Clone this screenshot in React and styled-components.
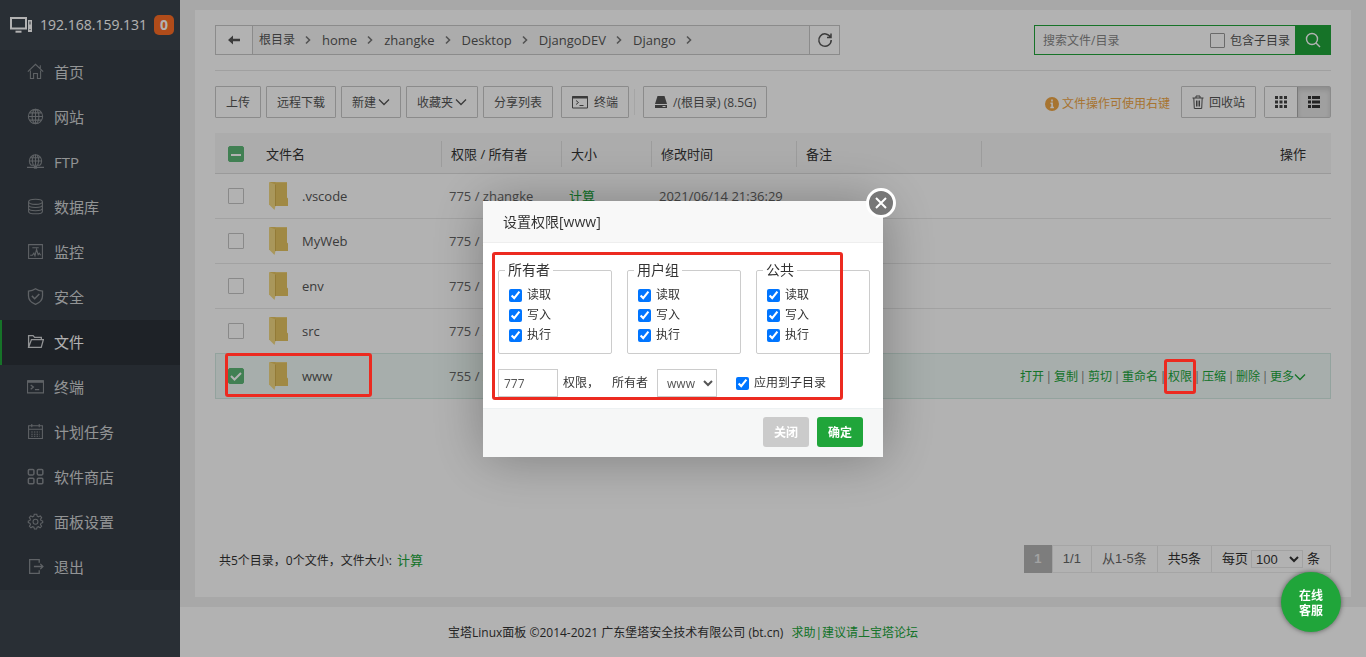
import React from "react";
import styled, { createGlobalStyle, css } from "styled-components";

const GREEN = "#20a53a";

const GlobalStyle = createGlobalStyle`
  *, *::before, *::after { box-sizing: border-box; }
  body {
    margin: 0;
    background: #f1f1f1;
    color: #333;
    font: 12px/18px "Open Sans", "Noto Sans CJK SC", sans-serif;
  }
  button, input, select { font: inherit; color: inherit; }
  button { cursor: pointer; }
  svg { display: block; flex: none; }
`;

const Page = styled.div`
  display: flex;
  min-height: 100vh;
`;

/* Sidebar */
const Sidebar = styled.aside`
  flex: none;
  width: 180px;
  background: #3c444d;
`;
const Host = styled.div`
  display: flex;
  align-items: center;
  height: 50px;
  padding: 0 6px 0 10px;
  color: #fff;
  font-size: 14px;
`;
const HostName = styled.span`
  flex: 1;
  padding-left: 8px;
`;
const Badge = styled.span`
  width: 20px;
  height: 20px;
  border-radius: 5px;
  background: #fc6d26;
  font-weight: 700;
  line-height: 20px;
  text-align: center;
`;
const Menu = styled.nav`
  background: #363d45;
`;
const MenuLink = styled.a`
  display: flex;
  align-items: center;
  gap: 10px;
  height: 45px;
  padding: 0 0 2px 25px;
  border-left: 2px solid ${(p) => (p.$active ? GREEN : "transparent")};
  background: ${(p) => (p.$active ? "#2c3138" : "transparent")};
  color: ${(p) => (p.$active ? "#fff" : "#d2d4d6")};
  font-size: 15px;
  text-decoration: none;
  svg { color: ${(p) => (p.$active ? "#d2d4d6" : "#888d92")}; }
`;

/* Content */
const Main = styled.main`
  flex: 1;
  min-width: 0;
  display: flex;
  flex-direction: column;
`;
const Card = styled.section`
  flex: 1;
  display: flex;
  flex-direction: column;
  margin: 10px 15px;
  padding: 15px 20px 24px;
  background: #fff;
`;
const PathBar = styled.div`
  display: flex;
  justify-content: space-between;
  padding-bottom: 15px;
  border-bottom: 1px solid #e6e6e6;
`;
const PathBox = styled.div`
  display: flex;
  flex: 0 1 625px;
  height: 30px;
  border: 1px solid #c8c8c8;
`;
const PathButton = styled.button`
  display: flex;
  align-items: center;
  justify-content: center;
  width: ${(p) => p.$width};
  padding: 0;
  border: 0;
  background: #fff;
  color: #555;
`;
const Crumbs = styled.nav`
  flex: 1;
  display: flex;
  align-items: center;
  padding-left: 6px;
  border: solid #c8c8c8;
  border-width: 0 1px;
  background: #f7f7f7;
`;
const Crumb = styled.a`
  display: flex;
  align-items: center;
  color: #555;
  font-size: ${(p) => (p.$root ? "12px" : "13px")};
  text-decoration: none;
  svg { margin: 0 10px 0 9px; color: #777; }
`;
const Search = styled.form`
  display: flex;
  align-items: center;
  width: 297px;
  height: 30px;
  border: 1px solid ${GREEN};
`;
const SearchInput = styled.input`
  flex: 1;
  min-width: 0;
  padding: 2px 8px 0;
  border: 0;
  background: none;
  outline: 0;
  &::placeholder { color: #888; opacity: 1; }
`;
const SearchLabel = styled.label`
  display: flex;
  align-items: center;
  gap: 5px;
  padding: 1px 5px 0 0;
  color: #555;
`;
const SearchButton = styled.button`
  display: flex;
  align-items: center;
  justify-content: center;
  align-self: stretch;
  width: 35px;
  padding: 0;
  border: 0;
  background: ${GREEN};
  color: #fff;
`;
const Box = styled.input`
  appearance: none;
  flex: none;
  display: block;
  width: ${(p) => p.$size || "16px"};
  height: ${(p) => p.$size || "16px"};
  margin: 0;
  border: 1px solid ${(p) => p.$line || "#c4c4c4"};
  border-radius: 1px;
`;
const TickWrap = styled.span`
  display: grid;
  width: 16px;
  & > * { grid-area: 1 / 1; }
  svg { color: #fff; pointer-events: none; }
  input:checked { background-color: #5eb878; border-color: #5eb878; border-radius: 2px; }
`;

const Toolbar = styled.div`
  display: flex;
  align-items: center;
  gap: 5px;
  padding: 15px 0;
`;
const ToolButton = styled.button`
  display: flex;
  align-items: center;
  gap: ${(p) => p.$gap || "2px"};
  height: 32px;
  padding: 2px 10px 0;
  border: 1px solid #c8c8c8;
  border-radius: 1px;
  background: #fff;
  color: #555;
  white-space: nowrap;
  svg { margin-bottom: 2px; }
`;
const Group = styled.div`
  display: flex;
  align-items: center;
  gap: 5px;
  margin-left: 3px;
`;
const Divider = styled.span`
  width: 1px;
  height: 26px;
  background: #ececec;
`;
const Hint = styled.span`
  display: flex;
  align-items: center;
  gap: 3px;
  margin: 0 6px 0 auto;
  padding-top: 4px;
  color: #f0a746;
  white-space: nowrap;
`;
const ViewSwitch = styled.div`
  display: flex;
  margin-left: 3px;
  height: 32px;
  border: 1px solid #c8c8c8;
  border-radius: 2px;
`;
const ViewButton = styled.button`
  display: flex;
  align-items: center;
  justify-content: center;
  width: 32px;
  padding: 0;
  border: 0;
  color: #444;
  background: #fff;
  ${(p) =>
    p.$active &&
    css`
      width: 33px;
      border-left: 1px solid #adadad;
      color: #333;
      background: #e6e6e6;
      box-shadow: inset 0 3px 5px rgba(0, 0, 0, 0.125);
    `}
`;

/* File table */
const FileTable = styled.table`
  width: 100%;
  table-layout: fixed;
  border-collapse: separate;
  border-spacing: 0;
  font-size: 13px;
`;
const Th = styled.th`
  height: 41px;
  padding: 2px 0 0 ${(p) => p.$pad || "0"};
  border-bottom: 1px solid #ddd;
  background: #f6f6f6;
  font-weight: 400;
  text-align: left;
`;
const ThLabel = styled.div`
  height: 26px;
  padding: 0 25px 0 9px;
  border-left: 1px solid ${(p) => (p.$plain ? "transparent" : "#e0e0e0")};
  line-height: 26px;
  text-align: ${(p) => p.$align || "left"};
`;
const Td = styled.td`
  height: 45px;
  padding: 0 0 0 ${(p) => p.$pad || "8px"};
  border-bottom: 1px solid #e8e8e8;
  color: #666;
  white-space: nowrap;
`;
const Tr = styled.tr`
  ${(p) =>
    p.$selected &&
    css`
      ${Td} { background: #effaf6; border-bottom-color: #d3eae2; box-shadow: 0 -1px 0 #d3eae2; }
      ${Td}:first-child { position: relative; border-left: 1px solid #d3eae2; padding-left: 12px; }
      ${Td}:last-child { border-right: 1px solid #d3eae2; }
    `}
`;
const FileName = styled.div`
  display: flex;
  align-items: center;
  gap: 12px;
  color: #555;
`;
const GreenLink = styled.a`
  color: ${GREEN};
  text-decoration: none;
  font-size: ${(p) => p.$size || "inherit"};
`;
const Actions = styled.div`
  display: flex;
  justify-content: flex-end;
  padding: 1px 24px 0 0;
  font-size: 12px;
`;
const Action = styled(GreenLink)`
  position: relative;
  display: flex;
  align-items: center;
`;
const Bar = styled.span`
  width: 10px;
  color: #777;
  text-align: center;
`;
/* Red frames that mark the steps, drawn above the shade */
const Mark = styled.span`
  position: absolute;
  z-index: 20;
  border: 3px solid #ec2a20;
  border-radius: 3px;
  pointer-events: none;
`;
const RowMark = styled(Mark)`
  top: -1px;
  left: 9px;
  width: 147px;
  height: 44px;
`;
const ActionMark = styled(Mark)`
  top: -9px;
  bottom: -8px;
  left: -4px;
  right: -4px;
`;

const Bottom = styled.div`
  display: flex;
  align-items: center;
  justify-content: space-between;
  margin-top: auto;
  padding-left: 4px;
  & > span { padding-top: 2px; }
  & > span a { margin-left: 2px; }
`;
const Pager = styled.div`
  display: flex;
  height: 28px;
  border: 1px solid #ececec;
  font: 13px/26px "Liberation Sans", "Noto Sans CJK SC", sans-serif;
`;
const PagerCell = styled.span`
  display: flex;
  align-items: center;
  padding: 0 10px;
  border-left: 1px solid #e8e8e8;
  color: ${(p) => (p.$dark ? "#333" : "#666")};
`;
const PagerCurrent = styled.span`
  width: 28px;
  margin: -1px 0 -1px -1px;
  padding: 1px 0;
  background: #b4b4b4;
  color: #e8e8e8;
  font-weight: 700;
  text-align: center;
`;
const PageSize = styled.select`
  width: 52px;
  height: 18px;
  margin: 0 4px 0 3px;
  padding: 0;
  border: 1px solid #e8e8e8;
  background: #fff;
`;
const Footer = styled.footer`
  height: 50px;
  padding: 1px 180px 0 0;
  background: #fff;
  line-height: 50px;
  text-align: center;
  a { margin-left: 8px; }
`;

/* Permission dialog */
const Shade = styled.div`
  position: fixed;
  inset: 0;
  z-index: 10;
  display: flex;
  align-items: center;
  justify-content: center;
  padding-top: 1px;
  background: rgba(0, 0, 0, 0.3);
`;
const Dialog = styled.div`
  position: relative;
  width: 400px;
  background: #fff;
  box-shadow: 1px 1px 50px rgba(0, 0, 0, 0.3);
`;
const DialogTitle = styled.h2`
  margin: 0;
  padding: 0 20px;
  border-bottom: 1px solid #eee;
  background: #f8f8f8;
  font-size: 14px;
  font-weight: 400;
  line-height: 41px;
`;
const CloseIcon = styled.button`
  position: absolute;
  top: -13px;
  right: -13px;
  width: 30px;
  height: 30px;
  padding: 0;
  border: 3px solid #fff;
  border-radius: 50%;
  background: #777;
  color: #fff;
`;
const DialogBody = styled.div`
  padding: 19px 13px 11px 15px;
`;
const DialogMark = styled(Mark)`
  top: 51px;
  left: 9px;
  width: 351px;
  height: 148px;
`;
const Scopes = styled.div`
  display: flex;
  gap: 15px;
`;
const Scope = styled.fieldset`
  flex: 1;
  height: 92px;
  min-width: 0;
  margin: 0;
  padding: 7px 10px 0;
  border: 1px solid #ccc;
  border-radius: 2px;
  legend {
    margin-left: -4px;
    padding: 0 3px;
    font-size: 14px;
    line-height: 16px;
  }
`;
const Check = styled.label`
  display: flex;
  align-items: center;
  gap: 5px;
  height: 20px;
  input { width: 13px; height: 13px; margin: 0; }
`;
const OwnerRow = styled.div`
  display: flex;
  align-items: center;
  margin-top: 15px;
`;
const ModeInput = styled.input`
  width: 60px;
  height: 28px;
  margin-right: 5px;
  padding: 0 5px;
  border: 1px solid #ccc;
  color: #555;
`;
const OwnerSelect = styled.select`
  width: 60px;
  height: 28px;
  margin: 0 19px 0 9px;
  padding: 0 0 0 5px;
  border: 1px solid #ccc;
  background: #fff;
  color: #555;
`;
const OwnerLabel = styled.label`
  margin-left: 13px;
`;
const DialogFooter = styled.div`
  display: flex;
  justify-content: flex-end;
  gap: 8px;
  padding: 8px 20px 10px;
  border-top: 1px solid #edf1f2;
  background: #f6f7f7;
`;
const DialogButton = styled.button`
  width: 46px;
  height: 30px;
  padding: 2px 0 0;
  border: 0;
  border-radius: 3px;
  background: ${(p) => (p.$primary ? GREEN : "#cbcbcb")};
  color: #fff;
  font-weight: 700;
`;
const ChatButton = styled.button`
  position: fixed;
  right: 25px;
  bottom: 25px;
  z-index: 15;
  width: 60px;
  padding: 16px 16px 14px;
  border: 0;
  border-radius: 50%;
  background: ${GREEN};
  box-shadow: 0 0 5px rgba(0, 0, 0, 0.5);
  color: #fff;
  font-weight: 700;
  line-height: 15px;
`;

const Icon = ({ w = 16, h = w, box = `0 0 ${w} ${h}`, sw = 1, children }) => (
  <svg width={w} height={h} viewBox={box} fill="none" stroke="currentColor" strokeWidth={sw} aria-hidden="true">
    {children}
  </svg>
);

const menuIcons = {
  home: <path d="M.8 8.2 8 1.2l7.2 7M3.2 7v7.5h3V9.8h3.6v4.7h3V7M12.5 5V2.2" />,
  globe: (
    <>
      <circle cx="8" cy="8" r="6.7" />
      <ellipse cx="8" cy="8" rx="3.2" ry="6.7" />
      <path d="M8 1.3v13.4M1.3 8h13.4M2.3 4.6h11.4M2.3 11.4h11.4" />
    </>
  ),
  ftp: (
    <>
      <path d="M4 11.6A5.8 5.8 0 1 1 12 11.6z" />
      <path d="M6 11.6C4.800 8.500 4.800 4.500 6.500 2M10 11.600c1.200-3.100 1.200-7.100-.5-9.600" />
      <path d="M2.300 7.500h11.400M3.200 4.500h9.600M8 1.500v10M0 13.500h16" />
      <path d="M6.500 13.500h3" strokeWidth="2.500" />
    </>
  ),
  database: (
    <>
      <ellipse cx="8" cy="3.6" rx="6.5" ry="2.4" />
      <path d="M1.5 3.6v9c0 1.3 3 2.3 6.5 2.3s6.5-1 6.5-2.3v-9M1.5 6.7C1.5 8 4.500 9 8 9s6.500-1 6.500-2.300M1.500 9.700c0 1.300 3 2.300 6.500 2.300s6.500-1 6.500-2.300" />
    </>
  ),
  monitor: (
    <>
      <path d="M1.500 1.500h13v13h-13zM5 4.500h6" />
      <path d="M3 11.500h2l1.500-2 1 2.500L9 6l1.500 5 1-1.500 1.500 2" />
    </>
  ),
  shield: (
    <>
      <path d="M8 .8c2 1.400 4.200 2 6.600 2.100v4.600c0 3.800-2.600 6.300-6.600 7.900-4-1.600-6.600-4.100-6.600-7.900V2.900C3.800 2.800 6 2.200 8 .8z" strokeWidth="1.200" />
      <path d="m4.600 7.400 2.600 2.700 4.400-4.500" strokeWidth="1.400" />
    </>
  ),
  folder: <path d="M1.500 13.500v-11h4.200l1.500 1.700h6.300v2M1.500 13.500l2.700-7.300h11.200l-2 7.300z" strokeWidth="1.200" />,
  terminal: (
    <>
      <path d="M.5 2.500h15v11.500H.5z" />
      <path d="M.5 3.300h15" strokeWidth="2.400" />
      <path d="m3.500 6.500 2.500 2-2.500 2M7.500 11h4" strokeWidth="1.200" />
    </>
  ),
  calendar: (
    <>
      <path d="M1.500 2.500h13v12h-13zM1.500 5.800h13M4.500 1v3M11.500 1v3" />
      <path d="M4 8.500h8M4 10.500h8M4 12.500h8" strokeDasharray="1.400 1.100" />
    </>
  ),
  apps: (
    <g strokeWidth="1.400">
      <rect x="1.300" y="1.300" width="5.200" height="5.200" rx="1" />
      <rect x="9.700" y="1.300" width="5.200" height="5.200" rx="1" />
      <rect x="1.300" y="9.700" width="5.200" height="5.200" rx="1" />
      <rect x="9.700" y="9.700" width="5.200" height="5.200" rx="1" />
    </g>
  ),
  gear: (
    <>
      <path d="m6.800 1.200-.4 1.800-1.200.6-1.700-.9-1.300 1.600 1 1.500-.3 1.200-1.700.6v1.400l1.700.7.4 1.200-1 1.600 1.400 1.400 1.500-1 1.300.5.5 1.700h2l.5-1.700 1.300-.5 1.500 1 1.400-1.400-1-1.600.4-1.200 1.700-.7V7.600L13.100 7l-.3-1.200 1-1.500-1.300-1.600-1.700.9L9.600 3l-.4-1.800z" />
      <circle cx="8" cy="8.200" r="2.300" />
    </>
  ),
  exit: <path d="M11.500 4.500V1.500h-9v13h9v-3M6.500 8h8.500M12.500 5.500 15 8l-2.500 2.500" strokeWidth="1.200" />,
};

const menu = [
  ["首页", "home"],
  ["网站", "globe"],
  ["FTP", "ftp"],
  ["数据库", "database"],
  ["监控", "monitor"],
  ["安全", "shield"],
  ["文件", "folder"],
  ["终端", "terminal"],
  ["计划任务", "calendar"],
  ["软件商店", "apps"],
  ["面板设置", "gear"],
  ["退出", "exit"],
];

const HostIcon = () => (
  <Icon w={22} h={18}>
    <path d="M1 2h15v10.500H1z" strokeWidth="2" />
    <path d="M5.500 15.700h6" strokeWidth="2" />
    <rect x="18" y="4" width="4" height="12" fill="currentColor" stroke="none" />
    <path d="M20 5.500v3M19.500 13.500h1" stroke="#3c444d" />
  </Icon>
);
const Chevron = () => (
  <Icon w={12} sw={1.3}>
    <path d="m1 3.500 5 5 5-5" />
  </Icon>
);
const CrumbArrow = () => (
  <Icon w={8} h={10} sw={1.6}>
    <path d="m2 1.500 3.500 3.500L2 8.500" />
  </Icon>
);
const Folder = () => (
  <svg width="22" height="30" viewBox="0 0 22 30" aria-hidden="true">
    <path d="M2 1h17v15.500l1 1V25H6z" fill="#e6c562" />
    <path d="M1 1l6.500 2.500V25L6.500 29 1 23.500z" fill="#f3d983" />
    <path d="M7.500 3.500V25" fill="none" stroke="#d3b050" />
    <path d="M7.500 1.500H19" fill="none" stroke="#ecd07a" />
  </svg>
);

const RowCheck = ({ label, checked, partial }) => (
  <TickWrap>
    <Box type="checkbox" aria-label={label} defaultChecked={checked} />
    {checked && (
      <Icon w={16} sw={2}>
        <path d={partial ? "M3 9h10" : "m3 8 3.500 3.500L13 5"} />
      </Icon>
    )}
  </TickWrap>
);

const crumbs = ["根目录", "home", "zhangke", "Desktop", "DjangoDEV", "Django"];
const files = [".vscode", "MyWeb", "env", "src", "www"];
const actions = ["打开", "复制", "剪切", "重命名", "权限", "压缩", "删除", "更多"];

const FileRow = ({ name }) => {
  const selected = name === "www";
  return (
    <Tr $selected={selected}>
      <Td $pad="13px">
        <RowCheck label={name} checked={selected} />
        {selected && <RowMark />}
      </Td>
      <Td $pad="12px">
        <FileName>
          <Folder />
          {name}
        </FileName>
      </Td>
      <Td>{selected ? "755" : "775"} / zhangke</Td>
      <Td>
        <GreenLink href="#size">计算</GreenLink>
      </Td>
      <Td>2021/06/14 21:36:29</Td>
      <Td />
      <Td>
        {selected && (
          <Actions>
            {actions.map((a, i) => (
              <React.Fragment key={a}>
                {i > 0 && <Bar>|</Bar>}
                <Action href="#action">
                  {a}
                  {a === "更多" && <Chevron />}
                  {a === "权限" && <ActionMark />}
                </Action>
              </React.Fragment>
            ))}
          </Actions>
        )}
      </Td>
    </Tr>
  );
};

const PermissionDialog = () => (
  <Shade>
    <Dialog role="dialog" aria-labelledby="dialog-title">
      <DialogTitle id="dialog-title">设置权限[www]</DialogTitle>
      <CloseIcon aria-label="关闭窗口">
        <Icon w={24} sw={2}>
          <path d="m7 7 10 10M17 7 7 17" />
        </Icon>
      </CloseIcon>
      <DialogBody>
        <Scopes>
          {["所有者", "用户组", "公共"].map((scope) => (
            <Scope key={scope}>
              <legend>{scope}</legend>
              {["读取", "写入", "执行"].map((right) => (
                <Check key={right}>
                  <input type="checkbox" defaultChecked />
                  {right}
                </Check>
              ))}
            </Scope>
          ))}
        </Scopes>
        <OwnerRow>
          <ModeInput id="mode" defaultValue="777" />
          <label htmlFor="mode">权限，</label>
          <OwnerLabel htmlFor="owner">所有者</OwnerLabel>
          <OwnerSelect id="owner" defaultValue="www">
            <option>www</option>
          </OwnerSelect>
          <Check>
            <input type="checkbox" defaultChecked />
            应用到子目录
          </Check>
        </OwnerRow>
      </DialogBody>
      <DialogFooter>
        <DialogButton>关闭</DialogButton>
        <DialogButton $primary>确定</DialogButton>
      </DialogFooter>
      <DialogMark />
    </Dialog>
  </Shade>
);

export default function App() {
  return (
    <>
      <GlobalStyle />
      <Page>
        <Sidebar>
          <Host>
            <HostIcon />
            <HostName>192.168.159.131</HostName>
            <Badge>0</Badge>
          </Host>
          <Menu>
            {menu.map(([label, icon]) => (
              <MenuLink key={label} href={`#${icon}`} $active={icon === "folder"}>
                <Icon w={17} box="0 0 16 16">{menuIcons[icon]}</Icon>
                {label}
              </MenuLink>
            ))}
          </Menu>
        </Sidebar>
        <Main>
          <Card>
            <PathBar>
              <PathBox>
                <PathButton $width="36px" aria-label="返回">
                  <Icon w={14}>
                    <path d="M1 7l5-4.500v3.300h7v2.400H6v3.300z" fill="currentColor" stroke="none" />
                  </Icon>
                </PathButton>
                <Crumbs>
                  {crumbs.map((c, i) => (
                    <Crumb key={c} href="#path" $root={i === 0}>
                      {c}
                      <CrumbArrow />
                    </Crumb>
                  ))}
                </Crumbs>
                <PathButton $width="29px" aria-label="刷新">
                  <Icon w={16} sw={1.5}>
                    <path d="M13.500 5.200A6.200 6.200 0 1 0 14.200 8M14 1.500v4h-4" />
                  </Icon>
                </PathButton>
              </PathBox>
              <Search>
                <SearchInput aria-label="搜索" placeholder="搜索文件/目录" />
                <SearchLabel>
                  <Box type="checkbox" $size="15px" $line="#999" />
                  包含子目录
                </SearchLabel>
                <SearchButton type="button" aria-label="搜索">
                  <Icon w={16} sw={1.4}>
                    <circle cx="7" cy="7" r="5.500" />
                    <path d="m11 11 4 4" />
                  </Icon>
                </SearchButton>
              </Search>
            </PathBar>

            <Toolbar>
              <ToolButton>上传</ToolButton>
              <ToolButton>远程下载</ToolButton>
              <ToolButton>
                新建
                <Chevron />
              </ToolButton>
              <ToolButton>
                收藏夹
                <Chevron />
              </ToolButton>
              <ToolButton>分享列表</ToolButton>
              <Group>
                <ToolButton $gap="6px">
                  <Icon w={16}>
                    <path d="M.5 2.500h15v11.500H.5z" />
                    <path d="M.5 3.300h15" strokeWidth="2.400" />
                    <path d="m4 6.500 2.500 2L4 10.500M7.500 11.500h4" />
                  </Icon>
                  终端
                </ToolButton>
                <Divider />
              </Group>
              <Group>
                <ToolButton $gap="5px">
                  <Icon w={14}>
                    <path d="M3.500 1h7l2.500 8H1zM1 10h12v3H1z" fill="currentColor" stroke="none" />
                    <path d="M8.500 11.500h3" stroke="#fff" />
                  </Icon>
                  /(根目录) (8.5G)
                </ToolButton>
              </Group>
              <Hint>
                <Icon w={14}>
                  <circle cx="7" cy="7" r="7" fill="currentColor" stroke="none" />
                  <path d="M7 2.500v2M5.500 6.200h1.600v4M5.300 10.500h3.600" stroke="#fff" strokeWidth="1.600" />
                </Icon>
                文件操作可使用右键
              </Hint>
              <ToolButton $gap="5px">
                <Icon w={12} h={14}>
                  <path d="M.5 3h11M4 3V1h4v2M1.800 3l.5 10.500h7.400l.5-10.500M4.500 5.500V11.500M6 5.500V11.500M7.500 5.500V11.500" />
                </Icon>
                回收站
              </ToolButton>
              <ViewSwitch>
                <ViewButton aria-label="图标视图">
                  <Icon w={12}>
                    <path d="M0 1.500h12M0 6h12M0 10.500h12" strokeWidth="3" strokeDasharray="3 1.500" />
                  </Icon>
                </ViewButton>
                <ViewButton $active aria-label="列表视图">
                  <Icon w={12}>
                    <path d="M0 1.500h3M4 1.500h8M0 6h3M4 6h8M0 10.500h3M4 10.500h8" strokeWidth="3" />
                  </Icon>
                </ViewButton>
              </ViewSwitch>
            </Toolbar>

            <FileTable>
              <colgroup>
                <col width="41" />
                <col width="185" />
                <col width="120" />
                <col width="90" />
                <col width="145" />
                <col width="185" />
                <col />
              </colgroup>
              <thead>
                <tr>
                  <Th $pad="13px">
                    <RowCheck label="全选" checked partial />
                  </Th>
                  <Th>
                    <ThLabel $plain>文件名</ThLabel>
                  </Th>
                  {["权限 / 所有者", "大小", "修改时间", "备注"].map((t) => (
                    <Th key={t}>
                      <ThLabel>{t}</ThLabel>
                    </Th>
                  ))}
                  <Th>
                    <ThLabel $align="right">操作</ThLabel>
                  </Th>
                </tr>
              </thead>
              <tbody>
                {files.map((name) => (
                  <FileRow key={name} name={name} />
                ))}
              </tbody>
            </FileTable>

            <Bottom>
              <span>
                共5个目录，0个文件，文件大小: <GreenLink href="#total" $size="13px">计算</GreenLink>
              </span>
              <Pager>
                <PagerCurrent>1</PagerCurrent>
                <PagerCell>1/1</PagerCell>
                <PagerCell>从1-5条</PagerCell>
                <PagerCell $dark>共5条</PagerCell>
                <PagerCell $dark>
                  <label htmlFor="page-size">每页</label>
                  <PageSize id="page-size" defaultValue="100">
                    <option>100</option>
                  </PageSize>
                  条
                </PagerCell>
              </Pager>
            </Bottom>
          </Card>
          <Footer>
            宝塔Linux面板 ©2014-2021 广东堡塔安全技术有限公司 (bt.cn)
            <GreenLink href="#forum">求助|建议请上宝塔论坛</GreenLink>
          </Footer>
        </Main>
      </Page>
      <PermissionDialog />
      <ChatButton>在线客服</ChatButton>
    </>
  );
}
